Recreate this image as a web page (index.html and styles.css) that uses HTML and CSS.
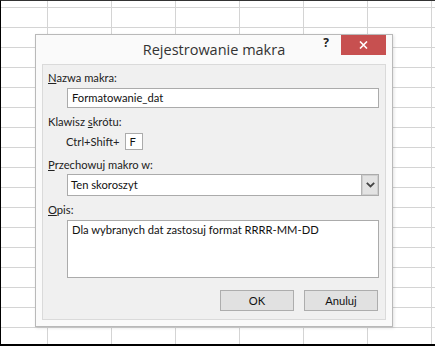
FILE: index.html
```html
<!DOCTYPE html>
<html lang="pl">
<head>
    <meta charset="UTF-8">
    <title>Rejestrowanie makra</title>
    <link rel="stylesheet" href="styles.css">
</head>
<body>
    <div class="sheet">
        <div class="dialog">
            <div class="titlebar">
                <span></span>
                <div class="title">Rejestrowanie makra</div>
                <div class="controls">
                    <span class="help">?</span>
                    <div class="close">
                        <svg width="9" height="8" viewBox="0 0 9 8">
                            <path d="M1 0.5 L8 7.5 M8 0.5 L1 7.5" stroke="#fff" stroke-width="1.6" fill="none"/>
                        </svg>
                    </div>
                </div>
            </div>
            <div class="panel">
                <div class="field-label"><u>N</u>azwa makra:</div>
                <div class="textbox">Formatowanie_dat</div>

                <div class="field-label gap"><span>Klawisz <u>s</u>krótu:</span></div>
                <div class="shortcut">
                    <span>Ctrl+Shift+</span>
                    <div class="keybox">F</div>
                </div>

                <div class="field-label gap-lg"><u>P</u>rzechowuj makro w:</div>
                <div class="combo">
                    <span class="combo-text">Ten skoroszyt</span>
                    <div class="combo-btn">
                        <svg width="9" height="6" viewBox="0 0 9 6">
                            <path d="M0.8 0.8 L4.5 4.5 L8.2 0.8" stroke="#444" stroke-width="1.8" fill="none"/>
                        </svg>
                    </div>
                </div>

                <div class="field-label gap"><u>O</u>pis:</div>
                <div class="textarea">Dla wybranych dat zastosuj format RRRR-MM-DD</div>

                <div class="buttons">
                    <div class="btn">OK</div>
                    <div class="btn">Anuluj</div>
                </div>
            </div>
        </div>
    </div>
</body>
</html>
```

FILE: styles.css
```css
body {
    margin: 0;
    font-family: "Open Sans", "Noto Sans", sans-serif;
    color: #1e1e1e;
}
.sheet {
    width: 435px;
    height: 346px;
    box-sizing: border-box;
    padding: 33px 0 0 34px;
    border-left: 1px solid #000;
    border-top: 1px solid #333;
    border-bottom: 2px solid #000;
    background-color: #fff;
    /* siatka arkusza */
    background-image:
        linear-gradient(to right, #d4d4d4 1px, transparent 1px),
        linear-gradient(to bottom, #d4d4d4 1px, transparent 1px);
    background-size: 64px 20px;
    background-position: 47px 7px;
    background-origin: border-box;
}
.dialog {
    width: 358px;
    box-sizing: border-box;
    padding: 0 6px 6px;
    border: 1px solid #b9b9b9;
    background: #fafafa;
    box-shadow: 1px 1px 3px rgba(0, 0, 0, 0.12);
}
.titlebar {
    display: grid;
    grid-template-columns: 1fr auto 1fr;
    height: 29px;
}
.title {
    font-size: 14.5px;
    line-height: 29px;
    color: #333;
    white-space: nowrap;
}
.controls {
    display: flex;
    justify-content: flex-end;
    align-items: flex-start;
}
.help {
    font-size: 12px;
    font-weight: bold;
    line-height: 16px;
    margin-right: 12px;
    color: #222;
}
.close {
    width: 45px;
    height: 20px;
    background: #c75050;
    display: flex;
    justify-content: center;
    align-items: center;
}
.panel {
    border: 1px solid #dadada;
    background: #f0f0f0;
    padding: 5px 6px 8px 5px;
    font-family: Lato, "Open Sans", sans-serif;
    font-size: 11.2px;
    color: #222;
}
.field-label {
    line-height: 16px;
    margin-bottom: 2px;
}
.field-label.gap {
    margin-top: 6px;
}
.field-label.gap-lg {
    margin-top: 7px;
    margin-bottom: 1px;
}
.textbox,
.combo,
.textarea {
    margin-left: 19px;
    box-sizing: border-box;
    border: 1px solid #ababab;
    background: #fff;
    color: #111;
}
.textbox {
    height: 20px;
    line-height: 18px;
    padding: 0 4px;
}
.shortcut {
    display: flex;
    align-items: center;
    margin: 3px 0 0 18px;
    height: 17px;
}
.keybox {
    width: 18px;
    height: 17px;
    box-sizing: border-box;
    margin-left: 5px;
    border: 1px solid #ababab;
    background: #fff;
    color: #111;
    line-height: 15px;
    padding-left: 4px;
}
.combo {
    height: 22px;
    display: flex;
}
.combo-text {
    flex: 1;
    line-height: 20px;
    padding-left: 3px;
}
.combo-btn {
    width: 16px;
    background: #e3e3e3;
    border-left: 1px solid #b4b4b4;
    box-shadow: inset 0 0 0 1px #cfcfcf;
    display: flex;
    justify-content: center;
    align-items: center;
}
.textarea {
    height: 58px;
    padding: 1px 4px;
    line-height: 16px;
}
.buttons {
    display: flex;
    justify-content: flex-end;
    gap: 10px;
    margin: 12px 1px 0 0;
}
.btn {
    width: 74px;
    height: 21px;
    box-sizing: border-box;
    border: 1px solid #adadad;
    background: #e1e1e1;
    text-align: center;
    line-height: 19px;
    color: #111;
}
```
